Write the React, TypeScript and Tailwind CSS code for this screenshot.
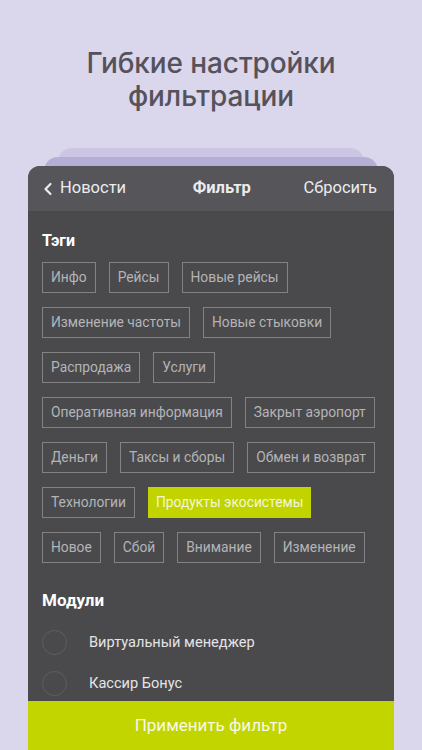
import { ChevronLeft } from 'lucide-react'

// rows are fixed to match the wrap of the original screen
const tagRows = [
  ['Инфо', 'Рейсы', 'Новые рейсы'],
  ['Изменение частоты', 'Новые стыковки'],
  ['Распродажа', 'Услуги'],
  ['Оперативная информация', 'Закрыт аэропорт'],
  ['Деньги', 'Таксы и сборы', 'Обмен и возврат'],
  ['Технологии', 'Продукты экосистемы'],
  ['Новое', 'Сбой', 'Внимание', 'Изменение'],
]

const selected = 'Продукты экосистемы'

const modules = ['Виртуальный менеджер', 'Кассир Бонус']

export default function App() {
  return (
    <div
      className="h-[750px] w-full overflow-hidden bg-[#dad6ec]"
      style={{ fontFamily: 'Roboto, "Noto Sans", sans-serif' }}
    >
      <h1
        className="pt-[47px] text-center text-[28px] leading-[33px] font-medium text-[#55525b] tracking-[-0.1px]"
        style={{ fontFamily: 'Inter, "Noto Sans", sans-serif' }}
      >
        Гибкие настройки
        <br />
        фильтрации
      </h1>

      {/* stacked cards peeking out behind the sheet */}
      <div className="mt-[35px] mx-[58px] h-[30px] -mb-[21px] rounded-t-[14px] bg-[#ccc5e3]" />
      <div className="mx-[44px] h-[30px] -mb-[21px] rounded-t-[14px] bg-[#b7aed8]" />

      <div className="relative mx-[28px] rounded-t-[12px] overflow-hidden bg-[#4a4a4d]">
        <div className="h-[45px] bg-[#55555a] flex items-center justify-between pl-[10px] pr-[17px] text-[16.5px] text-[#ececee]">
          <div className="flex items-center gap-[2px]">
            <ChevronLeft size={20} strokeWidth={2.6} className="text-[#ececee]" />
            <span>Новости</span>
          </div>
          <span className="font-bold ml-[14px]">Фильтр</span>
          <span>Сбросить</span>
        </div>

        <div className="px-[14px] pt-[20px] pb-[5px]">
          <h2 className="text-[16px] leading-[20px] font-bold text-white">Тэги</h2>
          <div className="mt-[11px] flex flex-col gap-[14px]">
            {tagRows.map((row, i) => (
              <div key={i} className="flex gap-[13px]">
                {row.map((t) =>
                  t === selected ? (
                    <span
                      key={t}
                      className="h-[31px] px-[8px] flex items-center whitespace-nowrap bg-[#c2d400] text-[13.8px] text-[#f3f6dc]"
                    >
                      {t}
                    </span>
                  ) : (
                    <span
                      key={t}
                      className="h-[31px] px-[8px] flex items-center whitespace-nowrap border border-[#838386] text-[13.8px] text-[#b4b4b7]"
                    >
                      {t}
                    </span>
                  )
                )}
              </div>
            ))}
          </div>

          <h2 className="mt-[27px] text-[17px] leading-[20px] font-bold text-white">Модули</h2>
          <div className="mt-[20px] flex flex-col gap-[16px]">
            {modules.map((m) => (
              <div key={m} className="flex items-center gap-[22px]">
                <span className="w-[25px] h-[25px] rounded-full border-[1.5px] border-[#5e5e61]" />
                <span className="text-[14.6px] text-[#e4e4e6]">{m}</span>
              </div>
            ))}
          </div>
        </div>

        <button
          type="button"
          className="w-full h-[49px] bg-[#c3d500] text-[17px] text-[#f7f9e4] flex items-center justify-center"
        >
          Применить фильтр
        </button>
      </div>
    </div>
  )
}
